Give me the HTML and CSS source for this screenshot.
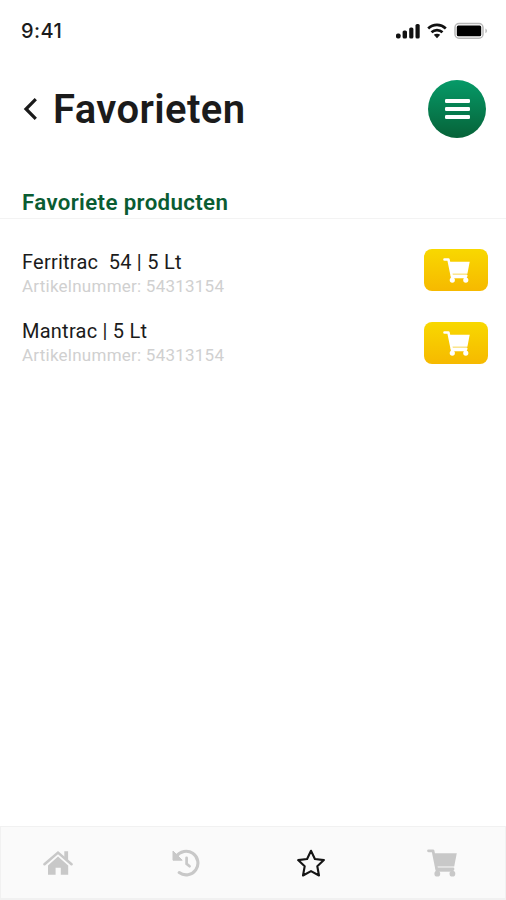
FILE: index.html
```html
<!DOCTYPE html>
<html lang="nl">
<head>
<meta charset="utf-8">
<title>Favorieten</title>
<link rel="stylesheet" href="styles.css">
</head>
<body>
<svg class="sprite" aria-hidden="true">
  <symbol id="cart" viewBox="0 0 30 28">
    <path d="M1.5 1.8H6L9.7 20H26" fill="none" stroke="currentColor" stroke-width="2.8" stroke-linecap="round" stroke-linejoin="round"/>
    <path d="M6.2 4.2H29.8L27.2 17.5H9.2Z"/>
    <path d="M8.6 18.9h18v3.8h-18z"/>
    <circle cx="10.3" cy="24.7" r="2.9"/><circle cx="25.4" cy="24.7" r="2.9"/>
  </symbol>
</svg>
<div class="screen">
  <div class="status">
    <span class="time">9:41</span>
    <div class="signals">
      <svg class="cell" viewBox="0 0 25 16"><rect x="0" y="10.5" width="4.6" height="5" rx="1.8"/><rect x="6.6" y="7.5" width="4.4" height="8" rx="1.6"/><rect x="13.2" y="4.5" width="4.2" height="11" rx="1.6"/><rect x="19.5" y="1" width="4.2" height="14.5" rx="1.6"/></svg>
      <svg class="wifi" viewBox="0 0 20 16"><path d="M1.2 5.4C6.2.7 13.8.7 18.8 5.4M4.5 9.2c3.2-2.9 7.8-2.9 11 0" fill="none" stroke="#111" stroke-width="2.7"/><path d="M6.8 11.8c1.9-1.5 4.5-1.5 6.4 0L10 15.2z"/></svg>
      <svg class="battery" viewBox="0 0 34 18"><rect x="1" y="1.6" width="28" height="14.6" rx="4" fill="#fff" stroke="#b8b8b8" stroke-width="1.5"/><rect x="2.8" y="3.5" width="24.4" height="10.8" rx="1.5" fill="#000"/><path d="M31.5 6.5c1.8.9 1.8 3.8 0 4.7z" fill="#aaa"/></svg>
    </div>
  </div>
  <header class="header">
    <svg class="back" viewBox="0 0 16 24"><path d="M13.8 2.2 4 12l9.8 9.8" fill="none" stroke="#1a1a1a" stroke-width="3.2"/></svg>
    <h1 class="title">Favorieten</h1>
    <button class="menu" aria-label="Menu"><span></span><span></span><span></span></button>
  </header>
  <h2 class="section">Favoriete producten</h2>
  <ul class="products">
    <li class="product">
      <div><p class="name">Ferritrac&nbsp; 54 | 5 Lt</p><p class="number">Artikelnummer: 54313154</p></div>
      <button class="add" aria-label="In winkelwagen"><svg viewBox="0 0 30 28"><use href="#cart"/></svg></button>
    </li>
    <li class="product">
      <div><p class="name second">Mantrac | 5 Lt</p><p class="number">Artikelnummer: 54313154</p></div>
      <button class="add" aria-label="In winkelwagen"><svg viewBox="0 0 30 28"><use href="#cart"/></svg></button>
    </li>
  </ul>
  <nav class="tabs">
    <svg class="home" viewBox="0 0 30 26"><path d="M1.5 14.2 15 2.6l13.5 11.6" fill="none" stroke="currentColor" stroke-width="2.6" stroke-linecap="round"/><path d="M21.3 1.2h3.8v10l-3.8-3.3zM15 6.6l10.2 8.8v9.4h-7.4v-7h-5.2v7H5v-9.4z"/></svg>
    <svg class="history" viewBox="0 0 28 28"><path d="M4.3 7.5A11.8 11.8 0 1 1 7.2 23.6" fill="none" stroke="currentColor" stroke-width="3.1" stroke-linecap="round"/><path d="M1 2v9.2h9.2z" stroke="currentColor" stroke-linejoin="round"/><path d="M14.6 8.8v6l3 2.4" fill="none" stroke="currentColor" stroke-width="2.7" stroke-linecap="round"/></svg>
    <svg class="star" viewBox="0 0 30 28"><path d="m15 1.8 3.9 8.2 9 1.1-6.6 6.2 1.7 9.2-8-4.4-8 4.4 1.7-9.2-6.6-6.2 9-1.1z" fill="none" stroke="currentColor" stroke-width="2.1" stroke-linejoin="round"/></svg>
    <svg class="basket" viewBox="0 0 30 28"><use href="#cart"/></svg>
  </nav>
</div>
</body>
</html>
```
FILE: styles.css
```css
* { box-sizing: border-box; }
body { margin: 0; background: #fff; font-family: Roboto, sans-serif; color: #1b1b1b; }
h1, h2, p, ul { margin: 0; padding: 0; }
button { border: 0; padding: 0; }
svg { display: block; fill: currentColor; flex: none; }
.sprite { display: none; }
.screen { height: 900px; display: flex; flex-direction: column; }
.status { height: 62px; padding: 0 18px 0 21px; display: flex; align-items: center; justify-content: space-between; }
.time { font: 500 20px/24px Inter, sans-serif; letter-spacing: .4px; }
.signals { display: flex; align-items: center; color: #111; }
.cell { width: 25px; height: 16px; }
.wifi { width: 20px; height: 16px; margin-left: 6px; }
.battery { width: 34px; height: 18px; margin-left: 7px; }
.header { height: 94px; padding: 0 20px 0 22px; display: flex; align-items: center; }
.back { width: 16px; height: 24px; }
.title { margin: 2px 0 0 15px; font-weight: 600; font-size: 40px; line-height: 48px; letter-spacing: .4px; }
.menu { width: 58px; height: 58px; margin-left: auto; border-radius: 50%; background: linear-gradient(#069a68, #066238); display: flex; flex-direction: column; align-items: center; justify-content: center; gap: 4px; }
.menu span { width: 25px; height: 4.3px; border-radius: 1.3px; background: #fff; }
.section { height: 63px; padding: 33px 22px 0; border-bottom: 1px solid #f3f3f3; font-weight: 600; font-size: 22.3px; line-height: 27px; letter-spacing: .35px; color: #0a5c32; }
.products { list-style: none; padding: 30px 18px 0 22px; display: flex; flex-direction: column; gap: 31px; }
.product { height: 42px; display: flex; justify-content: space-between; }
.name { font-size: 20px; font-weight: 450; line-height: 24px; margin-top: 1px; letter-spacing: .24px; }
.second { margin-top: -3px; }
.number { font-size: 17px; line-height: 24px; letter-spacing: .24px; color: #d0d0d0; }
.add { width: 64px; height: 42px; border-radius: 8px; color: #fff; background: linear-gradient(#f8d800, #f6b900); display: flex; align-items: center; justify-content: center; }
.add svg { width: 27px; height: 25px; }
.tabs { height: 74px; margin-top: auto; padding: 0 48px 0 42px; background: #fafafa; border: 1px solid #f1f1f1; border-bottom-width: 2px; display: flex; align-items: center; justify-content: space-between; color: #c8c8c8; }
.home { width: 30px; height: 26px; }
.history { width: 28px; height: 28px; }
.star { width: 30px; height: 28px; margin: 0 2px 0 -2px; color: #151515; }
.basket { width: 30px; height: 28px; }
```
